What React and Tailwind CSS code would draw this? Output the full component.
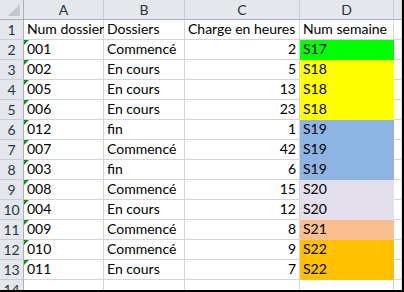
import React from "react";

const rows = [
  ["001", "Commencé", "2", "S17", "#00ff00"],
  ["002", "En cours", "5", "S18", "#ffff00"],
  ["005", "En cours", "13", "S18", "#ffff00"],
  ["006", "En cours", "23", "S18", "#ffff00"],
  ["012", "fin", "1", "S19", "#8db4e2"],
  ["007", "Commencé", "42", "S19", "#8db4e2"],
  ["003", "fin", "6", "S19", "#8db4e2"],
  ["008", "Commencé", "15", "S20", "#e4dfec"],
  ["004", "En cours", "12", "S20", "#e4dfec"],
  ["009", "Commencé", "8", "S21", "#fabf8f"],
  ["010", "Commencé", "9", "S22", "#ffc000"],
  ["011", "En cours", "7", "S22", "#ffc000"],
];

const cell =
  "h-5 border-r border-b border-[#d4d4d4] px-[3px] flex items-end pb-[2px] whitespace-nowrap overflow-visible leading-[16px]";
const head =
  "h-5 bg-[#e4e7eb] border-r border-b flex items-center justify-center text-[#2a3340] leading-[16px]";

function Tri() {
  return (
    <svg className="absolute left-0 top-0" width="5" height="5" viewBox="0 0 5 5">
      <polygon points="0,0 5,0 0,5" fill="#1f8a1f" />
    </svg>
  );
}

export default function App() {
  return (
    <div
      className="w-[404px] h-[292px] bg-white border-r-2 border-b-2 border-black overflow-hidden text-[14px] text-black"
      style={{ fontFamily: "Lato, 'Open Sans', sans-serif" }}
    >
      <div className="grid grid-cols-[24px_80px_81px_115px_94px_1fr] auto-rows-[20px]">
        <div className={head + " relative border-r-[#aab0b8] border-b-[#aab0b8]"}>
          <svg className="absolute right-[3px] bottom-[3px]" width="12" height="12" viewBox="0 0 12 12">
            <polygon points="12,0 12,12 0,12" fill="#c3c8ce" />
          </svg>
        </div>
        {["A", "B", "C", "D", ""].map((l, i) => (
          <div key={i} className={head + " border-r-[#c9cdd3] border-b-[#aab0b8]"}>
            {l}
          </div>
        ))}

        <div className={head + " border-r-[#aab0b8] border-b-[#c9cdd3]"}>1</div>
        <div className={cell + " relative z-10"}>Num dossier</div>
        <div className={cell + " bg-white relative z-20"}>Dossiers</div>
        <div className={cell + " bg-white relative z-20"}>Charge en heures</div>
        <div className={cell}>Num semaine</div>
        <div className={cell}></div>

        {rows.map((r, i) => (
          <React.Fragment key={i}>
            <div className={head + " border-r-[#aab0b8] border-b-[#c9cdd3]"}>{i + 2}</div>
            <div className={cell + " relative"}>
              <Tri />
              {r[0]}
            </div>
            <div className={cell}>{r[1]}</div>
            <div className={cell + " justify-end px-[2px]"}>{r[2]}</div>
            <div className={cell} style={{ backgroundColor: r[4], borderColor: r[4] }}>
              {r[3]}
            </div>
            <div className={cell}></div>
          </React.Fragment>
        ))}

        <div className={head + " border-r-[#aab0b8] border-b-[#c9cdd3]"}>14</div>
        <div className={cell}></div>
        <div className={cell}></div>
        <div className={cell}></div>
        <div className={cell}></div>
        <div className={cell}></div>
      </div>
    </div>
  );
}
